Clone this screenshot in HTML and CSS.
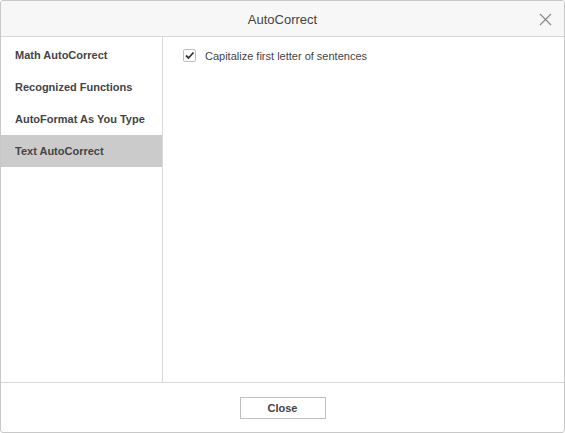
FILE: index.html
```html
<!DOCTYPE html>
<html>
<head>
<meta charset="utf-8">
<link rel="stylesheet" href="styles.css">
</head>
<body>
<div class="dialog">
  <div class="header">
    <span class="title">AutoCorrect</span>
    <span class="close-x">
      <svg width="13" height="13" viewBox="0 0 13 13"><path d="M1 1L12 12M12 1L1 12" stroke="#8a8a8a" stroke-width="1.2" fill="none"/></svg>
    </span>
  </div>
  <div class="main">
    <div class="sidebar">
      <div class="item">Math AutoCorrect</div>
      <div class="item">Recognized Functions</div>
      <div class="item">AutoFormat As You Type</div>
      <div class="item active">Text AutoCorrect</div>
    </div>
    <div class="content">
      <label class="check-row">
        <span class="checkbox">
          <svg width="11" height="11" viewBox="0 0 11 11"><path d="M2 5.5L4.5 8L9.5 2.5" stroke="#333" stroke-width="1.8" fill="none"/></svg>
        </span>
        <span class="check-label">Capitalize first letter of sentences</span>
      </label>
    </div>
  </div>
  <div class="footer">
    <button class="btn">Close</button>
  </div>
</div>
</body>
</html>
```
FILE: styles.css
```css
* { box-sizing: border-box; }
html, body { margin: 0; padding: 0; background: #fff; }
body { font-family: "Liberation Sans", Arial, sans-serif; color: #444; }
.dialog {
  width: 565px;
  height: 433px;
  border: 1px solid #c8c8c8;
  border-radius: 3px;
  display: flex;
  flex-direction: column;
  overflow: hidden;
}
.header {
  height: 36px;
  flex: none;
  background: #f7f7f7;
  border-bottom: 1px solid #d8d8d8;
  display: flex;
  align-items: center;
  justify-content: center;
  position: relative;
}
.title { font-size: 13px; color: #444; padding-top: 1px; }
.close-x {
  position: absolute;
  right: 12px;
  top: 12px;
  width: 13px;
  height: 13px;
  display: flex;
}
.main {
  flex: 1;
  display: flex;
  min-height: 0;
}
.sidebar {
  width: 162px;
  flex: none;
  border-right: 1px solid #dadada;
  padding-top: 2px;
}
.item {
  height: 32px;
  line-height: 32px;
  padding-left: 14px;
  font-size: 11px;
  font-weight: bold;
  color: #444;
}
.item.active { background: #cbcbcb; }
.content {
  flex: 1;
  padding: 12px 20px;
}
.check-row {
  display: flex;
  align-items: center;
  gap: 9px;
}
.checkbox {
  width: 13px;
  height: 13px;
  border: 1px solid #c0c0c0;
  border-radius: 2px;
  background: #fff;
  display: flex;
  align-items: center;
  justify-content: center;
}
.check-label { font-size: 11px; color: #444; }
.footer {
  height: 50px;
  flex: none;
  border-top: 1px solid #d8d8d8;
  display: flex;
  justify-content: center;
  padding-top: 14px;
}
.btn {
  width: 86px;
  height: 22px;
  border: 1px solid #c0c0c0;
  background: #fff;
  font-family: "Liberation Sans", Arial, sans-serif;
  font-size: 11px;
  font-weight: bold;
  color: #444;
  padding: 0;
}
```
